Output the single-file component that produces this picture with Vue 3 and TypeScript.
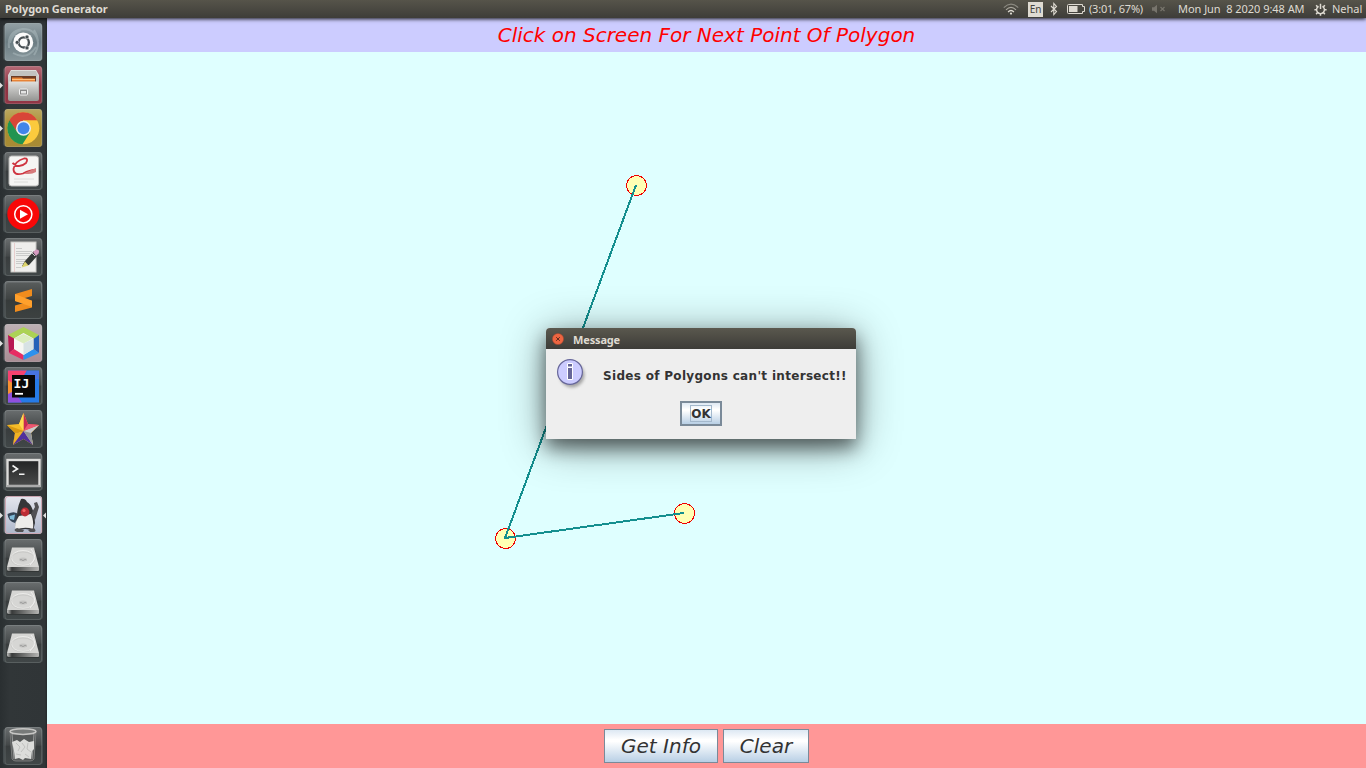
<script setup lang="ts">
interface LauncherItem {
  id: string
  tone: string
  running?: boolean
  focused?: boolean
}

const items: LauncherItem[] = [
  { id: 'dash', tone: 'slate' },
  { id: 'files', tone: 'red', running: true },
  { id: 'chrome', tone: 'gold', running: true },
  { id: 'reader', tone: 'plain' },
  { id: 'music', tone: 'plain' },
  { id: 'editor', tone: 'plain' },
  { id: 'sublime', tone: 'plain' },
  { id: 'netbeans', tone: 'mauve', running: true },
  { id: 'idea', tone: 'plain' },
  { id: 'star', tone: 'plain' },
  { id: 'terminal', tone: 'plain' },
  { id: 'java', tone: 'white', running: true, focused: true },
  { id: 'disk', tone: 'plain' },
  { id: 'disk', tone: 'plain' },
  { id: 'disk', tone: 'plain' },
  { id: 'trash', tone: 'plain' },
]

const points = [
  { x: 589, y: 133 },
  { x: 458, y: 486 },
  { x: 637, y: 461 },
]
const path = points.map((p) => `${p.x},${p.y}`).join(' ')
</script>

<template>
  <div class="desktop">
    <header class="panel">
      <span class="app-name">Polygon Generator</span>
      <svg class="wifi" width="16" height="12" viewBox="0 0 16 12" fill="none">
        <path d="M.8 4.6Q8-2.2 15.2 4.6" stroke="#8b8980" stroke-width="1.2" />
        <path d="M3 6.9Q8 2 13 6.9" stroke="#aaa79d" stroke-width="1.2" />
        <path d="M5.1 9Q8 6 10.9 9" stroke="#dfdbd2" stroke-width="1.3" />
        <circle cx="8" cy="10.6" r="1.1" fill="#dfdbd2" />
      </svg>
      <span class="lang">En</span>
      <svg class="bluetooth" width="8" height="14" viewBox="0 0 8 14" fill="none" stroke="#dfdbd2" stroke-width="1.1">
        <path d="M1 4L6.5 9.5L3.8 12.5V1.5L6.5 4.5L1 10" />
      </svg>
      <svg class="battery" width="19" height="10" viewBox="0 0 19 10">
        <path d="M1.5 .5H15.5V2.5H17.5V7.5H15.5V9.5H1.5Q.5 9.5 .5 8.5V1.5Q.5 .5 1.5 .5Z" fill="none" stroke="#dfdbd2" />
        <path d="M2 2H10.5V8H2Z" fill="#dfdbd2" />
      </svg>
      <span class="charge">(3:01, 67%)</span>
      <svg class="mute" width="14" height="10" viewBox="0 0 14 10">
        <path d="M0 3.2H2L5 .7V9.3L2 6.8H0Z" fill="#77746c" />
        <path d="M8.5 3L12.5 7M12.5 3L8.5 7" stroke="#77746c" stroke-width="1.2" />
      </svg>
      <span class="clock">Mon Jun&nbsp; 8 2020 9:48 AM</span>
      <svg class="gear" width="13" height="13" viewBox="0 0 13 13" fill="none" stroke="#dfdbd2">
        <path d="M4.6 3.3A3.9 3.9 0 1 0 8.4 3.3" stroke-width="1.4" />
        <path d="M6.5 .8V6M.4 6.7H2.8M10.2 6.7H12.6M2.1 2.3L3.7 3.9M10.9 2.3L9.3 3.9M2.1 11.1L3.9 9.3M10.9 11.1L9.1 9.3M6.5 10.4V12.8" stroke-width="1.5" />
      </svg>
      <span class="user">Nehal</span>
    </header>

    <svg class="defs" width="0" height="0">
      <defs>
        <linearGradient id="plain" x2="0" y2="1"><stop stop-color="#6a6e6f" /><stop offset=".48" stop-color="#434748" /><stop offset=".5" stop-color="#393d3e" /><stop offset="1" stop-color="#414748" /></linearGradient>
        <linearGradient id="slate" x2="0" y2="1"><stop stop-color="#94a1a6" /><stop offset=".5" stop-color="#6c7d83" /><stop offset="1" stop-color="#88979c" /></linearGradient>
        <linearGradient id="red" x2="0" y2="1"><stop stop-color="#b66b77" /><stop offset=".5" stop-color="#8e3341" /><stop offset="1" stop-color="#933646" /></linearGradient>
        <linearGradient id="gold" x2="0" y2="1"><stop stop-color="#bba861" /><stop offset=".5" stop-color="#aa8c2d" /><stop offset="1" stop-color="#a88b36" /></linearGradient>
        <linearGradient id="mauve" x2="0" y2="1"><stop stop-color="#bdb0b4" /><stop offset="1" stop-color="#a98d94" /></linearGradient>
        <linearGradient id="white" x2="0" y2="1"><stop stop-color="#e5e6ee" /><stop offset="1" stop-color="#aeb7cb" /></linearGradient>
        <linearGradient id="metal" x2="0" y2="1"><stop stop-color="#e0e0de" /><stop offset="1" stop-color="#979795" /></linearGradient>
        <linearGradient id="edge" x2="1" y2="0"><stop stop-color="#c9c9c7" /><stop offset=".15" stop-color="#383a3a" /><stop offset="1" stop-color="#b5b5b3" /></linearGradient>
        <linearGradient id="screen" x2="0" y2="1"><stop stop-color="#222324" /><stop offset="1" stop-color="#4a4b4b" /></linearGradient>
      </defs>
    </svg>

    <div class="workspace">
      <nav class="launcher">
        <svg v-for="(item, i) in items" :key="i" class="slot" :class="item.id" width="47" height="43" viewBox="0 0 47 43">
          <rect x="3" y="3.5" width="40" height="36" rx="3" fill="#5c6365" opacity=".5" />
          <rect x="4.6" y="2" width="37.4" height="38" rx="3" :fill="`url(#${item.tone})`" />
          <rect x="5.1" y="2.5" width="36.4" height="37" rx="2.5" fill="none" stroke="#b9c1c4" stroke-opacity=".2" />
          <path v-if="item.running" d="M0 18.5L3 21.5L0 24.5Z" fill="#e1e1e1" />
          <path v-if="item.focused" d="M46 18.5L43 21.5L46 24.5Z" fill="#e1e1e1" />

          <g v-if="item.id === 'dash'">
            <path d="M9 27Q7 10 23 8Q36 8 38 21M13 32Q27 40 36 26M10 22Q12 12 21 9M34 9Q42 22 34 34" fill="none" stroke="#c4d0d3" stroke-width="2" opacity=".35" />
            <circle cx="23.2" cy="21.4" r="10" fill="#fbfbfb" />
            <circle cx="23.8" cy="21.4" r="5.1" fill="none" stroke="#454d51" stroke-width="2.3" />
            <g stroke="#fbfbfb" stroke-width=".6"><circle cx="17.2" cy="21.4" r="2" fill="#454d51" /><circle cx="27" cy="15.9" r="2" fill="#454d51" /><circle cx="27" cy="26.9" r="2" fill="#454d51" /></g>
          </g>

          <g v-else-if="item.id === 'files'">
            <path d="M11 6H36L39 11V35Q39 37 37 37H10Q8 37 8 35V11Z" fill="url(#metal)" />
            <path d="M11 7H36L37.5 12H9.5Z" fill="#c2c2c0" /><rect x="11" y="12" width="25" height="7" fill="#6c3c26" />
            <path d="M12 13.5H22L23 14.5H35V18H12Z" fill="#e78337" /><path d="M12 15.5H35" stroke="#ffc17e" />
            <path d="M9 17.5H38V35Q38 36 37 36H10Q9 36 9 35Z" fill="url(#metal)" />
            <rect x="19.5" y="25" width="8" height="6" rx="1" fill="#888" stroke="#f1f1f1" /><path d="M21 27H26V29.5H21Z" fill="#e4e4e4" />
          </g>

          <g v-else-if="item.id === 'chrome'">
            <circle cx="23.3" cy="21.3" r="16" fill="#fbca3d" />
            <path d="M8.5 15A16 16 0 0 1 37.2 13.3H23.3L17 24Z" fill="#d84638" />
            <path d="M9.4 13.3A16 16 0 0 0 22.5 37.3L30 25.5H17.5Z" fill="#229451" />
            <circle cx="23.5" cy="21.3" r="7.5" fill="#e9eef2" /><circle cx="23.5" cy="21.3" r="6" fill="#4285e9" />
          </g>

          <g v-else-if="item.id === 'reader'">
            <rect x="9" y="6" width="29.5" height="30" rx="2.5" fill="#f5f5f3" stroke="#b8b8b6" />
            <path d="M14 29H34M14 32H28" stroke="#dcdcda" />
            <path d="M12.5 13Q19 19 26 13Q29 8 24 8.5Q15 11 13.5 19Q13.5 26 23 23.5Q31 19.5 36 20" fill="none" stroke="#cf3540" stroke-width="1.8" />
            <path d="M24 23.5Q31 25 36 22V18Q31 20 24 23.5Z" fill="#d77b7c" />
          </g>

          <g v-else-if="item.id === 'music'">
            <circle cx="23.3" cy="21" r="16" fill="#f80808" />
            <circle cx="23.3" cy="21.3" r="8.6" fill="none" stroke="#fff" stroke-width="1.5" />
            <path d="M20 16.8L28 21.3L20 25.8Z" fill="#fff" />
          </g>

          <g v-else-if="item.id === 'editor'">
            <rect x="11" y="6" width="25" height="30" fill="#eeeeec" stroke="#c7c7c4" />
            <path d="M14.5 7V36" stroke="#e4b9b9" stroke-width=".6" />
            <path d="M16 12.5H22M16 15.5H32M16 17.5H30M16 19.5H32M16 23.5H27M16 25.5H30M16 27.5H24M16 31.5H21" stroke="#c0c2c2" stroke-width=".8" />
            <path d="M22 30L25 25L34 15L38 19L29 29Z" fill="#343937" /><path d="M21.5 31.5L25 25.5L28.5 29.5Z" fill="#ddd56d" /><path d="M33 16L36 13.5Q40.5 13.5 38.5 17.5L36 20Z" fill="#d69bc0" /><path d="M32 17L35 20" stroke="#ccc" />
          </g>

          <g v-else-if="item.id === 'sublime'">
            <rect x="6" y="4" width="35" height="35" rx="3" fill="#303231" opacity=".25" />
            <path d="M15 15L32 10V17L23 19.5L32 21.8V28.5L15 33V26.5L24 24L15 22Z" fill="#f08c1d" />
            <path d="M15 15L32 21.8V28L15 22Z" fill="#ffa02c" />
          </g>

          <g v-else-if="item.id === 'netbeans'">
            <path d="M23.5 5L39 13L34 17L23.5 11L13 17L8 13Z" fill="#acd254" />
            <path d="M8 13L14 16.5V27L9 31Z" fill="#b81752" /><path d="M9 31L14 27L23.5 32V38Z" fill="#e72d63" />
            <path d="M39 13V31L33.5 27V17Z" fill="#2560b8" /><path d="M23.5 38V32L33.5 27L39 31Z" fill="#2d91ed" />
            <path d="M14 16.5L23.5 11L33.5 16.5V27L23.5 33L14 27Z" fill="#f7f8f3" />
            <path d="M14 16.5L23.5 12L33 16.5L23.5 21.5Z" fill="#dbedbd" /><path d="M23.5 21.5L33 17V27L23.5 33Z" fill="#d7e2e4" />
          </g>

          <g v-else-if="item.id === 'idea'">
            <rect x="8" y="5.5" width="31" height="32" fill="#267be7" />
            <path d="M8 5.5H27L20 16L13 31L8 29Z" fill="#f64270" /><path d="M8 15L15 20L13 32L8 30Z" fill="#f69132" /><path d="M8 29L14 26L22 37.5H8Z" fill="#9050dd" /><path d="M26 6H39V14L30 15Z" fill="#4774df" />
            <rect x="12" y="10" width="23" height="22.5" fill="#080808" />
            <text x="13.6" y="22.5" class="ij">IJ</text><path d="M15 28.8H23" stroke="#fff" stroke-width="1.8" />
          </g>

          <g v-else-if="item.id === 'star'">
            <path d="M23.5 5L28 16L39 17L31 25L33 37L23.5 31L13 37L15 25L7 17L19 16Z" fill="#f5bc28" />
            <path d="M23.5 5L28 16L39 17L23.5 23Z" fill="#c52955" /><path d="M39 17L31 25L33 37L23.5 23Z" fill="#c9c9cb" /><path d="M15 25L23.5 23L33 37L23.5 31L13 37Z" fill="#50319c" /><path d="M15 25L23.5 23L13 37Z" fill="#f0b323" />
            <path d="M23.5 5V23L19 16Z" fill="#ffda52" /><path d="M7 17L23.5 23L15 25Z" fill="#d99912" /><path d="M28 16L39 17L23.5 23Z" fill="#ed5672" /><path d="M23.5 23L31 25L33 37Z" fill="#919399" />
          </g>

          <g v-else-if="item.id === 'terminal'">
            <rect x="7.5" y="9" width="32" height="26" fill="url(#screen)" stroke="#dcdcda" stroke-width="2.4" />
            <path d="M7 35H40" stroke="#aaa" stroke-width="2" /><path d="M12.5 14.5L17.5 18L12.5 21M19 23.2H24.5" fill="none" stroke="#f2f2f2" stroke-width="1.6" />
          </g>

          <g v-else-if="item.id === 'java'">
            <rect x="5.5" y="2.5" width="36" height="37" rx="2.5" fill="none" stroke="#cba6b2" />
            <path d="M7.5 20Q15 16 19 21L15 29Q8 27 7.5 20Z" fill="#354557" /><path d="M9.5 22L15 20.5L14 26L10 25Z" fill="#7fbad8" />
            <path d="M21 5Q25 4 27 8Q34 12 35 29L33 37Q25 33 18 37L15 32L17 22Q17 14 21 5Z" fill="#353638" />
            <path d="M19 22Q13 31 16 36Q24 32 33 35Q34 27 31 20Z" fill="#eeedeb" />
            <path d="M31 20L35 13L34 9L37 8L39 13L35 26ZM17 34Q12 36 17 38H23L24 36M28 36L30 38H34Q37 37 34 34" fill="#515154" />
            <circle cx="25" cy="18" r="4.4" fill="#bb2d34" /><circle cx="24" cy="16.5" r="1.6" fill="#f26462" />
          </g>

          <g v-else-if="item.id === 'disk'">
            <path d="M7 31L12 12H35L39 31V35H7Z" fill="#252727" opacity=".5" />
            <path d="M12 10.5H34L39 30H7Z" fill="#d6d6d4" />
            <path d="M7.2 30H39V33Q39 34 38 34H9Q7 34 7 32Z" fill="url(#edge)" />
            <ellipse cx="23" cy="21" rx="11.5" ry="7.5" fill="none" stroke="#ececea" /><ellipse cx="23" cy="22" rx="12" ry="7" fill="none" stroke="#bdbdbb" stroke-width=".5" />
            <path d="M31 12Q36 18 34 23L30 28" fill="none" stroke="#eee" /><ellipse cx="23" cy="22.5" rx="4" ry="2" fill="#c4c4c2" /><path d="M20 23Q21 21.8 22 23T24 23T26.5 23" fill="none" stroke="#909090" stroke-width=".8" />
          </g>

          <g v-else>
            <path d="M10 6H36L34 34Q33 36 30 36H16Q13 36 12 34Z" fill="#565959" stroke="#777979" />
            <path d="M12 9L14 34M34 9L32 34" stroke="#989a9a" />
            <ellipse cx="23" cy="6.6" rx="13" ry="2.8" fill="#777a79" stroke="#c6c6c4" stroke-width="1.5" />
            <path d="M12 17L17 15L20 17L24 14L29 17L34 16V24L32 26L31 34L25 33L23 35L19 33L15 34L14 26Z" fill="#dcdddb" />
            <path d="M16 18L20 22L18 26M22 18L25 22L21 27M28 18L27 24L31 27M16 29L21 30M25 29L29 32" fill="none" stroke="#c0c1bf" />
          </g>
        </svg>
      </nav>

      <main class="generator">
        <div class="heading"><span>Click on Screen For Next Point Of Polygon</span></div>
        <svg class="canvas" width="1319" height="672" viewBox="0 0 1319 672">
          <g shape-rendering="crispEdges">
            <circle v-for="p in points" :key="p.x" :cx="p.x + 0.5" :cy="p.y + 0.5" r="10" fill="#ffffb4" stroke="#f00000" />
            <polyline :points="path" fill="none" stroke="#148f8f" stroke-width="2" />
          </g>
        </svg>
        <div class="actions">
          <button class="info">Get Info</button>
          <button class="clear">Clear</button>
        </div>
      </main>
    </div>

    <section class="dialog">
      <div class="titlebar">
        <svg width="12" height="12" viewBox="0 0 12 12">
          <circle cx="6" cy="6" r="5.6" fill="#ed6541" stroke="#a5462f" stroke-width=".5" />
          <path d="M4.2 4.2L7.8 7.8M7.8 4.2L4.2 7.8" stroke="#602b1d" />
        </svg>
        <span>Message</span>
      </div>
      <div class="body">
        <svg class="info-icon" width="32" height="32" viewBox="0 0 32 32">
          <circle cx="15" cy="16" r="12.5" fill="#777" opacity=".6" class="shade" />
          <circle cx="13" cy="13" r="12.4" fill="#ccccff" stroke="#666699" stroke-width="1.2" />
          <path d="M10.5 4.5H15.5V8H10.5ZM10.5 8.5H15.5V20.5H10.5Z" fill="#666699" stroke="#fff" />
        </svg>
        <span class="message">Sides of Polygons can't intersect!!</span>
      </div>
      <button class="ok"><span>OK</span></button>
    </section>
  </div>
</template>

<style>
body { overflow: hidden; }
</style>

<style scoped>
.desktop { position: relative; width: 1366px; height: 768px; overflow: hidden; font-family: "DejaVu Sans", sans-serif; }
.desktop * { box-sizing: border-box; }
.defs { position: absolute; }
.panel { position: relative; z-index: 1; display: flex; align-items: center; height: 18px; background: linear-gradient(#56544a, #3e3d39); color: #dfdbd2; font: 11px/18px "Noto Sans", sans-serif; white-space: nowrap; box-shadow: 0 1px 4px rgba(0, 0, 0, .9); }
.app-name { margin-left: 5px; width: 104px; font-weight: 700; letter-spacing: -.03px; }
.wifi { margin-left: 894px; }
.lang { width: 15px; height: 15px; margin-left: 9px; background: #dfdbd2; color: #44433e; font-size: 10px; line-height: 15px; text-align: center; }
.bluetooth { margin-left: 7px; }
.battery { margin-left: 9px; }
.charge { width: 54px; margin-left: 3px; letter-spacing: -.18px; }
.mute { margin-left: 9px; }
.clock { width: 127px; margin-left: 12px; letter-spacing: -.04px; }
.gear { margin-left: 9px; }
.user { margin-left: 5px; }
.workspace { display: flex; height: 750px; }
.launcher { display: flex; flex-direction: column; width: 47px; padding-top: 3px; background: linear-gradient(90deg, #2a2f31, #313638 20%, #303537 95%, #252a2c); }
.slot { display: block; flex: none; }
.slot.trash { margin-top: 59px; }
.ij { font: bold 13px "DejaVu Sans Mono", monospace; fill: #fff; }
.generator { width: 1319px; }
.heading { display: flex; justify-content: center; height: 34px; background: #ccccff; color: #f00; font-size: 20px; font-style: italic; line-height: 35px; white-space: nowrap; }
.canvas { display: block; background: #dfffff; }
.actions { display: flex; justify-content: center; gap: 5px; height: 44px; padding-top: 5px; background: #ff9797; }
button { padding: 0; border: 1px solid #7a8a99; background: linear-gradient(#dde8f3, #fff 30%, #fff 36%, #b8cfe5); color: #333; font-family: inherit; }
.actions button { height: 34px; font-size: 20px; font-style: italic; line-height: 30px; }
.info { width: 114px; }
.clear { width: 86px; }
.dialog { position: absolute; left: 546px; top: 328px; z-index: 2; display: flex; flex-direction: column; width: 310px; height: 111px; border-radius: 4px 4px 0 0; background: #eee; box-shadow: 0 9px 18px rgba(0, 0, 0, .5), 0 6px 44px rgba(0, 0, 0, .42); }
.titlebar { display: flex; align-items: center; height: 21px; padding-left: 6px; border-radius: 4px 4px 0 0; background: linear-gradient(#5a584e, #3d3c38); color: #dfdbd2; font: bold 11px/21px "Noto Sans", sans-serif; }
.titlebar span { margin: 2px 0 0 9px; letter-spacing: -.15px; }
.body { display: flex; height: 52px; padding: 10px 0 0 11px; }
.info-icon { flex: none; }
.shade { filter: blur(1.5px); }
.message { margin-left: 14px; color: #333; font-size: 12px; font-weight: 700; line-height: 35px; letter-spacing: .31px; white-space: nowrap; }
.ok { align-self: center; display: flex; align-items: center; justify-content: center; width: 42px; height: 25px; border-width: 2px; }
.ok span { width: 22px; height: 17px; border: 1px solid #a3b8cc; font-size: 12px; font-weight: 700; line-height: 17px; text-align: center; }
</style>
